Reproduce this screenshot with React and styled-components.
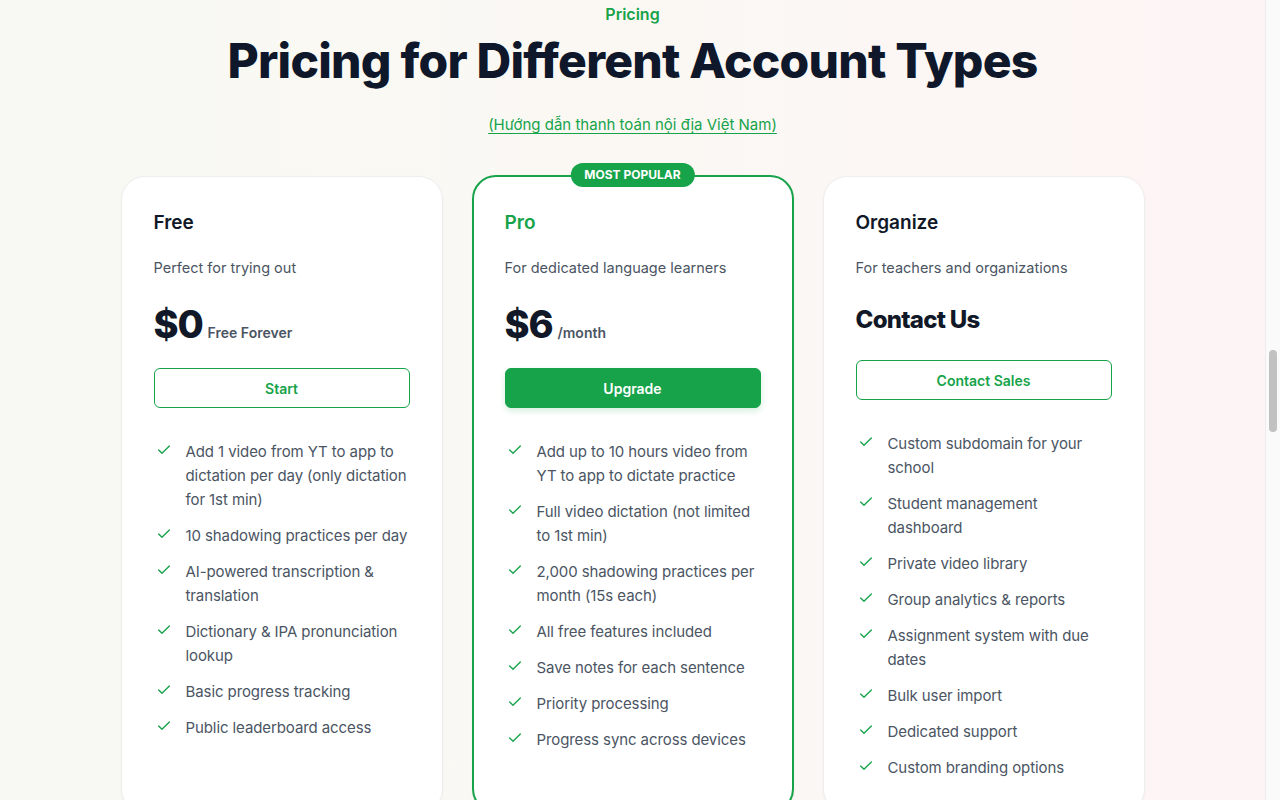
import React from 'react';
import styled, { createGlobalStyle } from 'styled-components';
import { Check } from 'lucide-react';

const GlobalStyle = createGlobalStyle`
  body {
    margin: 0;
    font-family: Inter, "Noto Sans", sans-serif;
    background: linear-gradient(to right, #f8f9f3, #fbf8f4 50%, #fdf5f5);
    color: #111827;
    overflow: hidden;
  }
`;

const Page = styled.div`
  margin-right: 15px;
  height: 100vh;
  overflow: hidden;
`;

const ScrollRail = styled.div`
  position: fixed;
  top: 0;
  right: 0;
  width: 15px;
  height: 100vh;
  background: #fafafa;
  border-left: 1px solid #ececec;
  box-sizing: border-box;
`;

const ScrollThumb = styled.div`
  position: absolute;
  top: 350px;
  left: 3px;
  width: 8px;
  height: 82px;
  border-radius: 4px;
  background: #c1c1c1;
`;

const Section = styled.section`
  padding: 2px 0 40px;
`;

const Header = styled.div`
  display: flex;
  flex-direction: column;
  align-items: center;
  text-align: center;
`;

const Eyebrow = styled.div`
  color: #16a34a;
  font-size: 16px;
  font-weight: 600;
  line-height: 24px;
`;

const Title = styled.h2`
  margin: 6px 0 0;
  font-size: 48px;
  line-height: 58px;
  font-weight: 800;
  letter-spacing: -0.016em;
  color: #0f172a;
`;

const GuideLink = styled.a`
  margin-top: 24px;
  font-size: 15px;
  line-height: 22px;
  color: #16a34a;
  text-decoration: underline;
  text-underline-offset: 3px;
  cursor: pointer;
`;

const Grid = styled.div`
  display: grid;
  grid-template-columns: repeat(3, 322px);
  gap: 29px;
  justify-content: center;
  margin-top: 40px;
`;

const Card = styled.div`
  position: relative;
  background: #fff;
  border-radius: 24px;
  border: ${p => (p.$featured ? '2px solid #16a34a' : '1px solid #eeeeee')};
  padding: ${p => (p.$featured ? '32px 31px' : '32px')};
  margin-top: ${p => (p.$featured ? '-1px' : '0')};
  box-shadow: 0 1px 3px rgba(0, 0, 0, 0.04);
`;

const Badge = styled.div`
  position: absolute;
  top: -14px;
  left: 50%;
  transform: translateX(-50%);
  background: #16a34a;
  color: #fff;
  font-size: 12px;
  font-weight: 700;
  line-height: 24px;
  padding: 0 14px;
  border-radius: 999px;
  white-space: nowrap;
`;

const PlanName = styled.h3`
  margin: 0;
  font-size: 19px;
  line-height: 28px;
  font-weight: 600;
  color: ${p => (p.$featured ? '#16a34a' : '#111827')};
`;

const PlanDesc = styled.p`
  margin: 21px 0 0;
  font-size: 14.5px;
  line-height: 20px;
  color: #4b5563;
`;

const PriceRow = styled.div`
  display: flex;
  align-items: baseline;
  gap: 5px;
  margin-top: 26px;
`;

const Amount = styled.span`
  font-size: ${p => (p.$small ? '24px' : '38px')};
  line-height: ${p => (p.$small ? '32px' : '40px')};
  font-weight: 800;
  letter-spacing: -0.03em;
  color: #111827;
`;

const Period = styled.span`
  font-size: 14px;
  font-weight: 600;
  color: #4b5563;
`;

const ActionButton = styled.button`
  display: block;
  width: 100%;
  height: 40px;
  margin-top: 24px;
  border-radius: 6px;
  font-family: inherit;
  font-size: 14px;
  font-weight: 600;
  cursor: pointer;
  border: 1px solid #16a34a;
  background: ${p => (p.$filled ? '#16a34a' : '#fff')};
  color: ${p => (p.$filled ? '#fff' : '#16a34a')};
  box-shadow: ${p => (p.$filled ? '0 3px 6px rgba(22, 163, 74, 0.18)' : 'none')};
`;

const Features = styled.ul`
  list-style: none;
  margin: 32px 0 0;
  padding: 0;
  display: flex;
  flex-direction: column;
  gap: 12px;
`;

const Feature = styled.li`
  display: flex;
  gap: 12px;
  font-size: 15px;
  line-height: 24px;
  letter-spacing: -0.006em;
  color: #4b5563;

  svg {
    flex: none;
    margin: 2px 2px 0;
    color: #16a34a;
  }
`;

const plans = [
  {
    name: 'Free',
    desc: 'Perfect for trying out',
    price: '$0',
    period: 'Free Forever',
    cta: 'Start',
    features: [
      'Add 1 video from YT to app to dictation per day (only dictation for 1st min)',
      '10 shadowing practices per day',
      'AI-powered transcription & translation',
      'Dictionary & IPA pronunciation lookup',
      'Basic progress tracking',
      'Public leaderboard access',
    ],
  },
  {
    name: 'Pro',
    featured: true,
    desc: 'For dedicated language learners',
    price: '$6',
    period: '/month',
    cta: 'Upgrade',
    features: [
      'Add up to 10 hours video from YT to app to dictate practice',
      'Full video dictation (not limited to 1st min)',
      '2,000 shadowing practices per month (15s each)',
      'All free features included',
      'Save notes for each sentence',
      'Priority processing',
      'Progress sync across devices',
    ],
  },
  {
    name: 'Organize',
    desc: 'For teachers and organizations',
    price: 'Contact Us',
    contact: true,
    cta: 'Contact Sales',
    features: [
      'Custom subdomain for your school',
      'Student management dashboard',
      'Private video library',
      'Group analytics & reports',
      'Assignment system with due dates',
      'Bulk user import',
      'Dedicated support',
      'Custom branding options',
    ],
  },
];

export default function App() {
  return (
    <>
      <GlobalStyle />
      <Page>
        <Section>
          <Header>
            <Eyebrow>Pricing</Eyebrow>
            <Title>Pricing for Different Account Types</Title>
            <GuideLink>(Hướng dẫn thanh toán nội địa Việt Nam)</GuideLink>
          </Header>
          <Grid>
            {plans.map(plan => (
              <Card key={plan.name} $featured={plan.featured}>
                {plan.featured && <Badge>MOST POPULAR</Badge>}
                <PlanName $featured={plan.featured}>{plan.name}</PlanName>
                <PlanDesc>{plan.desc}</PlanDesc>
                <PriceRow>
                  <Amount $small={plan.contact}>{plan.price}</Amount>
                  {plan.period && <Period>{plan.period}</Period>}
                </PriceRow>
                <ActionButton $filled={plan.featured}>{plan.cta}</ActionButton>
                <Features>
                  {plan.features.map(f => (
                    <Feature key={f}>
                      <Check size={16} strokeWidth={2} />
                      <span>{f}</span>
                    </Feature>
                  ))}
                </Features>
              </Card>
            ))}
          </Grid>
        </Section>
      </Page>
      <ScrollRail>
        <ScrollThumb />
      </ScrollRail>
    </>
  );
}
